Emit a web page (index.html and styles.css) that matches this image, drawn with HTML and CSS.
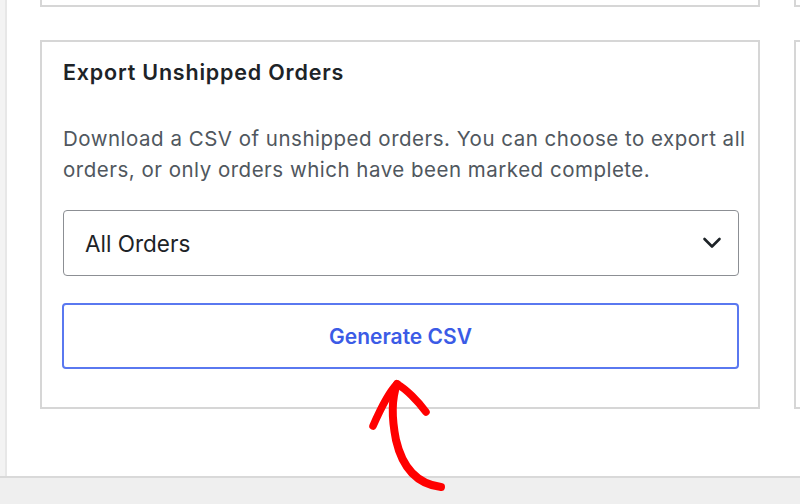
FILE: index.html
```html
<!DOCTYPE html>
<html>
<head>
<meta charset="utf-8">
<link rel="stylesheet" href="styles.css">
</head>
<body>
<div class="page">
  <div class="main">
    <div class="sidebar"></div>
    <div class="content">
      <div class="card card-stub"></div>
      <div class="card card-stub"></div>
      <section class="card export">
        <h2 class="title">Export Unshipped Orders</h2>
        <p class="desc">Download a CSV of unshipped orders. You can choose to export all orders, or only orders which have been marked complete.</p>
        <div class="select">
          <span class="select-value">All Orders</span>
          <svg class="chevron" width="20" height="12" viewBox="0 0 20 12"><path d="M2.5 2 L10 9.5 L17.5 2" fill="none" stroke="#1d2327" stroke-width="2.6" stroke-linecap="round" stroke-linejoin="round"/></svg>
        </div>
        <button class="btn">Generate CSV</button>
      </section>
      <div class="card card-side"></div>
    </div>
  </div>
  <div class="footer"></div>
</div>
<svg class="arrow" width="800" height="504" viewBox="0 0 800 504">
  <path d="M441 487 C416 484 402 466 396 440 C392 420 391 400 397 384" fill="none" stroke="#ff0000" stroke-width="8" stroke-linecap="round"/>
  <path d="M373 426 C380 410 388 393 397 384 C406 389 418 401 426 412" fill="none" stroke="#ff0000" stroke-width="7.5" stroke-linecap="round" stroke-linejoin="round"/>
</svg>
</body>
</html>
```

FILE: styles.css
```css
html, body {
  margin: 0;
  padding: 0;
  background: #ffffff;
}
body {
  width: 800px;
  height: 504px;
  overflow: hidden;
  position: relative;
  font-family: Inter, "Noto Sans", sans-serif;
}
.page {
  display: flex;
  flex-direction: column;
  height: 504px;
}
.main {
  flex: 0 0 476px;
  display: flex;
  overflow: hidden;
}
.sidebar {
  flex: 0 0 5px;
  background: #f3f3f3;
  border-right: 2px solid #e7e7e7;
}
.content {
  flex: 1;
  min-width: 0;
  padding-left: 33px;
  display: grid;
  grid-template-columns: 720px 720px;
  grid-template-rows: 7px auto;
  column-gap: 34px;
  row-gap: 33px;
  align-content: start;
}
.card {
  box-sizing: border-box;
  border: 2px solid #d6d6d6;
  background: #fff;
}
.card-stub {
  border-top: none;
  height: 7px;
}
.card-side {
  height: 369px;
}
.export {
  height: 369px;
  padding: 17px 19px 0 21px;
  display: flex;
  flex-direction: column;
}
.title {
  margin: 0;
  font-size: 21.5px;
  font-weight: 600;
  letter-spacing: 0.8px;
  color: #1d2327;
  line-height: 26px;
}
.desc {
  margin: 38px -14px 0 0;
  font-size: 20.5px;
  letter-spacing: 0.5px;
  line-height: 31px;
  color: #50575e;
}
.select {
  margin-top: 25px;
  height: 66px;
  box-sizing: border-box;
  border: 1.5px solid #8c8f94;
  border-radius: 4px;
  display: flex;
  align-items: center;
  justify-content: space-between;
  padding: 0 16px 0 21px;
}
.select-value {
  font-size: 22.5px;
  color: #1d2327;
  letter-spacing: 0;
}
.btn {
  margin-top: 27px;
  margin-left: -1px;
  height: 66px;
  box-sizing: border-box;
  border: 2px solid #5a78f0;
  border-radius: 4px;
  background: #fff;
  color: #3b5be6;
  font-family: Inter, "Noto Sans", sans-serif;
  font-size: 21px;
  font-weight: 600;
  cursor: pointer;
}
.footer {
  flex: 1;
  background: #efefef;
  border-top: 2px solid #d9d9d9;
}
.arrow {
  position: absolute;
  left: 0;
  top: 0;
  pointer-events: none;
}
```
